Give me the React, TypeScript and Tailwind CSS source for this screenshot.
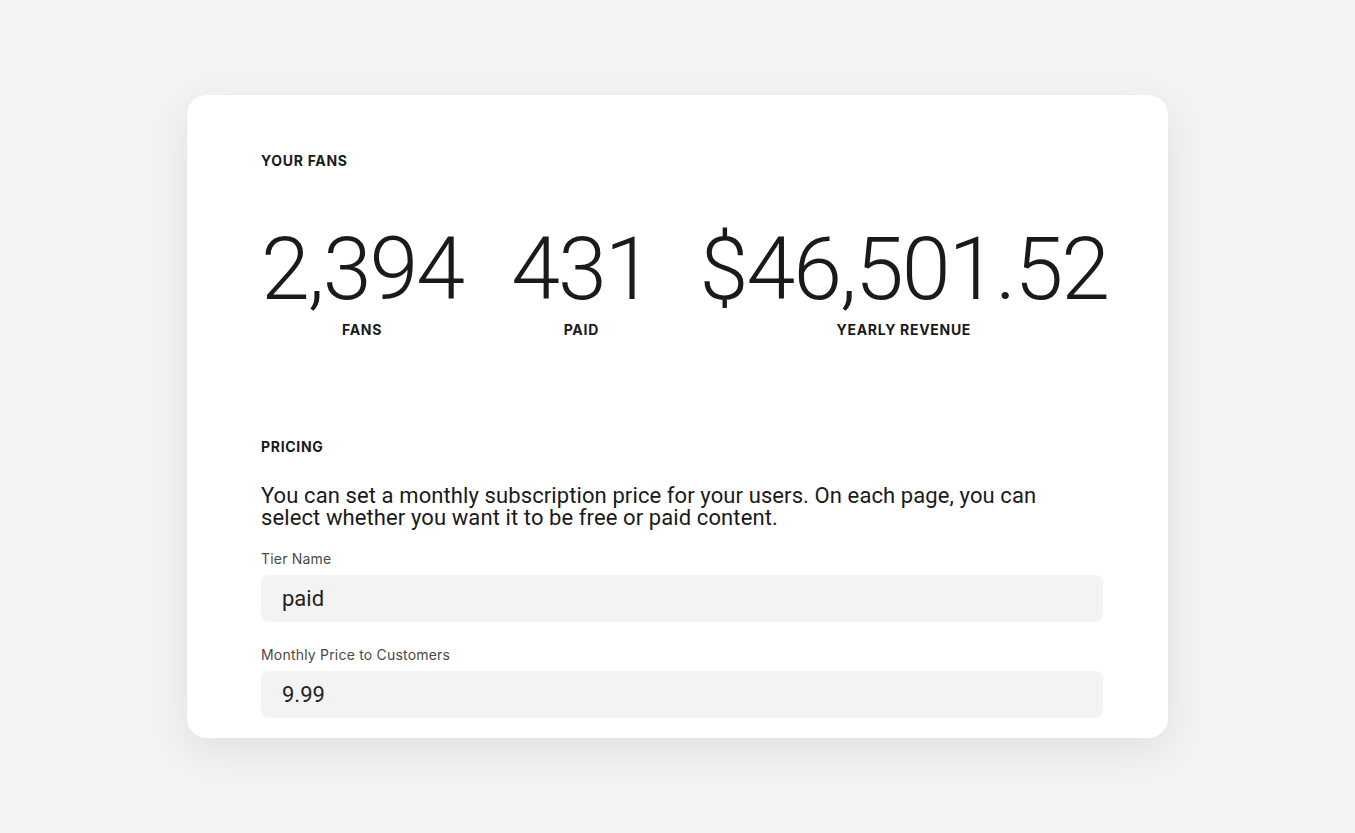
// App.tsx
const stats = [
  { value: '2,394', label: 'FANS' },
  { value: '431', label: 'PAID' },
  { value: '$46,501.52', label: 'YEARLY REVENUE' },
];

const SectionTitle = ({ children }: { children: string }) => (
  <h2 className="font-['Inter',_sans-serif] text-[14px] leading-4 font-bold tracking-[0.05em] text-[#1a1a1a]">{children}</h2>
);

const Field = ({ label, value }: { label: string; value: string }) => (
  <label className="block">
    <span className="block font-['Inter',_sans-serif] text-[14px] leading-[18px] tracking-[0.2px] text-[#4a4a4a]">{label}</span>
    <input
      readOnly
      value={value}
      className="mt-[7px] block w-full h-[47px] rounded-lg bg-[#f3f3f3] px-[21px] text-[22px] text-[#222] outline-none"
    />
  </label>
);

export default function App() {
  return (
    <div className="min-h-[833px] bg-[#f3f3f3] pt-[95px] font-['Roboto',_'Inter',_sans-serif]">
      <div className="mx-auto w-[981px] rounded-[20px] bg-white pl-[74px] pr-[65px] pt-[58px] pb-[20px] shadow-[0_12px_40px_rgba(0,0,0,0.08)]">
        <SectionTitle>YOUR FANS</SectionTitle>

        <div className="mt-[56px] flex gap-[48px]">
          {stats.map((s) => (
            <div key={s.label} className="flex flex-col items-center">
              <span className="text-[88px] leading-[88px] font-light tracking-[-2px] text-[#1a1a1a]">{s.value}</span>
              <span className="mt-[9px] font-['Inter',_sans-serif] text-[14px] leading-4 font-bold tracking-[0.05em] text-[#1a1a1a]">{s.label}</span>
            </div>
          ))}
        </div>

        <div className="mt-[101px]">
          <SectionTitle>PRICING</SectionTitle>
        </div>

        <p className="mt-[30px] max-w-[800px] text-[22px] leading-[22px] tracking-[0.1px] text-[#1a1a1a]">
          You can set a monthly subscription price for your users. On each page, you can select whether you want it to be free or paid content.
        </p>

        <div className="mt-[21px] flex flex-col gap-[24px]">
          <Field label="Tier Name" value="paid" />
          <Field label="Monthly Price to Customers" value="9.99" />
        </div>
      </div>
    </div>
  );
}
